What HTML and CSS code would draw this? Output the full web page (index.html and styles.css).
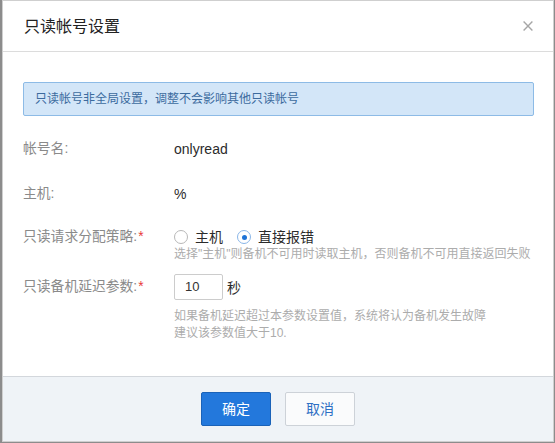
FILE: index.html
```html
<!DOCTYPE html>
<html lang="zh-CN">
<head>
<meta charset="utf-8">
<title>只读帐号设置</title>
<link rel="stylesheet" href="styles.css">
</head>
<body>
<div class="dialog">
  <div class="dlg-header">
    <span class="dlg-title">只读帐号设置</span>
    <span class="dlg-close">
      <svg width="10" height="10" viewBox="0 0 10 10"><path d="M0.6 0.6L9.4 9.4M9.4 0.6L0.6 9.4" stroke="#a6a6a6" stroke-width="1.4" fill="none"/></svg>
    </span>
  </div>
  <div class="dlg-body">
    <div class="alert">只读帐号非全局设置，调整不会影响其他只读帐号</div>
    <div class="row row-1">
      <div class="label">帐号名:</div>
      <div class="value">onlyread</div>
    </div>
    <div class="row row-2">
      <div class="label">主机:</div>
      <div class="value">%</div>
    </div>
    <div class="row row-3">
      <div class="label label-radio">只读请求分配策略:<span class="req">*</span></div>
      <div class="control">
        <div class="radios">
          <span class="radio"><span class="dot"></span>主机</span>
          <span class="radio checked"><span class="dot"></span>直接报错</span>
        </div>
        <div class="hint hint-radio">选择"主机"则备机不可用时读取主机，否则备机不可用直接返回失败</div>
      </div>
    </div>
    <div class="row row-4">
      <div class="label">只读备机延迟参数:<span class="req">*</span></div>
      <div class="control">
        <div class="input-line">
          <span class="input">10</span><span class="unit">秒</span>
        </div>
      </div>
    </div>
    <div class="hints">
      <div class="hint">如果备机延迟超过本参数设置值，系统将认为备机发生故障</div>
      <div class="hint">建议该参数值大于10.</div>
    </div>
  </div>
  <div class="dlg-footer">
    <span class="btn btn-primary">确定</span>
    <span class="btn btn-default">取消</span>
  </div>
</div>
</body>
</html>
```
FILE: styles.css
```css
html, body {
  margin: 0;
  padding: 0;
}
body {
  background: #8c8c8c;
  width: 555px;
  height: 443px;
  overflow: hidden;
  font-family: "Liberation Sans", "Noto Sans CJK SC", sans-serif;
}
.dialog {
  margin-left: 2px;
  width: 552px;
  height: 442px;
  box-sizing: border-box;
  border: 1px solid #cfcfcf;
  background: #fff;
  display: flex;
  flex-direction: column;
}
.dlg-header {
  height: 50px;
  border-bottom: 1px solid #dcdcdc;
  display: flex;
  align-items: center;
  justify-content: space-between;
  padding: 0 20px 0 21px;
  flex: none;
}
.dlg-title {
  font-size: 16px;
  color: #222;
  line-height: 20px;
  padding-top: 1px;
}
.dlg-close {
  display: flex;
  width: 10px;
  height: 10px;
}
.dlg-body {
  height: 324px;
  flex: none;
  box-sizing: border-box;
  padding: 30px 0 0 20px;
}
.alert {
  width: 511px;
  height: 34px;
  box-sizing: border-box;
  background: #d3e6f8;
  border: 1px solid #8dbbe6;
  border-radius: 2px;
  color: #3c6b9e;
  font-size: 12px;
  line-height: 32px;
  padding-left: 11px;
}
.row {
  display: flex;
  align-items: flex-start;
}
.row-1 { margin-top: 20px; }
.row-2 { margin-top: 19px; }
.row-3 { margin-top: 21px; }
.row-4 { margin-top: 12px; }
.label {
  width: 151px;
  flex: none;
  font-size: 13.8px;
  color: #8a8a8a;
  line-height: 26px;
}
.label-radio {
  line-height: 18px;
}
.req {
  color: #e83a3a;
  margin-left: 1px;
}
.value {
  font-size: 14px;
  color: #2b2b2b;
  line-height: 26px;
}
.control {
  display: flex;
  flex-direction: column;
}
.radios {
  display: flex;
  align-items: center;
  height: 18px;
  gap: 14px;
}
.radio {
  display: flex;
  align-items: center;
  font-size: 14px;
  color: #2b2b2b;
  line-height: 18px;
}
.dot {
  width: 14px;
  height: 14px;
  box-sizing: border-box;
  border: 1px solid #b8b8b8;
  border-radius: 50%;
  margin-right: 7px;
  background: #fff;
  position: relative;
}
.radio.checked .dot {
  border-color: #8ab6e8;
}
.radio.checked .dot::after {
  content: "";
  position: absolute;
  left: 3.5px;
  top: 3.5px;
  width: 5px;
  height: 5px;
  border-radius: 50%;
  background: #1e73d6;
}
.hint {
  font-size: 12px;
  color: #acacac;
  line-height: 17px;
}
.hint-radio {
  line-height: 16px;
}
.input-line {
  display: flex;
  align-items: center;
}
.input {
  width: 49px;
  height: 26px;
  box-sizing: border-box;
  border: 1px solid #cccccc;
  border-radius: 2px;
  font-size: 13px;
  color: #333;
  line-height: 24px;
  padding-left: 10px;
}
.unit {
  font-size: 14px;
  color: #2b2b2b;
  margin-left: 4px;
}
.hints {
  margin-top: 8px;
  padding-left: 151px;
}
.dlg-footer {
  flex: 1;
  background: #eff3f7;
  border-top: 1px solid #d3d7dc;
  display: flex;
  align-items: flex-start;
  justify-content: center;
  padding-top: 15px;
  gap: 14px;
}
.btn {
  width: 70px;
  height: 34px;
  box-sizing: border-box;
  border-radius: 2px;
  font-size: 14px;
  line-height: 32px;
  text-align: center;
}
.btn-primary {
  background: #2378dc;
  border: 1px solid #1a62b8;
  color: #fff;
}
.btn-default {
  background: #fafbfc;
  border: 1px solid #cdd2d8;
  color: #2d6fc4;
}
```
